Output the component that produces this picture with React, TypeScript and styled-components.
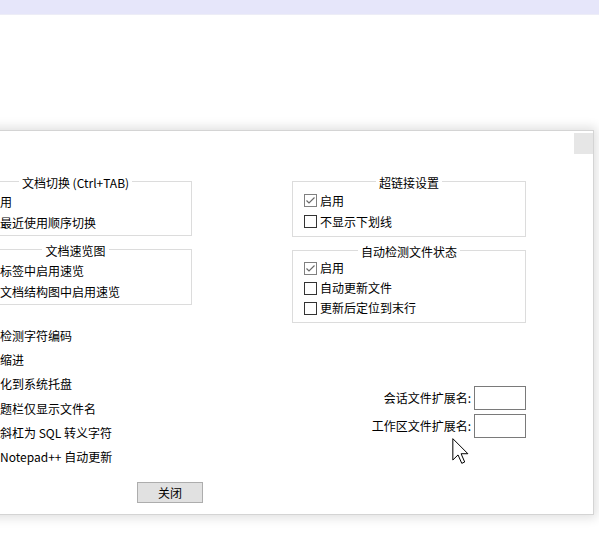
import React from "react";
import styled, { createGlobalStyle } from "styled-components";

const GlobalStyle = createGlobalStyle`
  html, body {
    margin: 0;
    padding: 0;
    background: #fff;
    overflow: hidden;
  }
  body {
    width: 599px;
    height: 548px;
    font-family: "Noto Sans CJK SC", "Noto Sans", sans-serif;
    font-size: 12px;
    color: #000;
  }
`;

const Page = styled.div`
  position: relative;
  height: 548px;
`;

const TopBar = styled.div`
  height: 14px;
  background: #e6e6fa;
  border-bottom: 1px solid #ededf7;
`;

const Dialog = styled.div`
  position: relative;
  box-sizing: border-box;
  width: 654px;
  margin: 115px 0 0 -60px;
  padding: 50px 67px 11px 18px;
  background: #fff;
  border: 1px solid #d4d4d4;
  box-shadow: 0 0 10px 3px rgba(0, 0, 0, 0.12);
`;

const CloseBox = styled.div`
  position: absolute;
  top: 2px;
  right: 0;
  width: 19px;
  height: 21px;
  background: #e6e6e6;
`;

const Columns = styled.div`
  display: grid;
  grid-template-columns: 233px 234px;
  column-gap: 100px;
  align-items: start;
`;

const Column = styled.div`
  display: flex;
  flex-direction: column;
`;

const Group = styled.div<{ $top?: number; $padB: number }>`
  margin-top: ${(p) => p.$top ?? 0}px;
  padding-bottom: ${(p) => p.$padB}px;
  border: 1px solid #dcdcdc;
`;

const GroupTitle = styled.div`
  width: fit-content;
  margin: -7px auto 0;
  padding: 0 3px;
  background: #fff;
  line-height: 16px;
  white-space: nowrap;
`;

const Rows = styled.div<{ $indent: number; $top?: number }>`
  display: flex;
  flex-direction: column;
  margin-top: ${(p) => p.$top ?? 0}px;
  padding-left: ${(p) => p.$indent}px;
`;

const CheckRow = styled.label<{ $h: number }>`
  display: flex;
  align-items: center;
  gap: 3px;
  height: ${(p) => p.$h}px;
  line-height: 16px;
  white-space: nowrap;
`;

const Box = styled.span<{ $checked?: boolean }>`
  flex: none;
  display: flex;
  box-sizing: border-box;
  width: 13px;
  height: 13px;
  background: #fff;
  border: 1px solid ${(p) => (p.$checked ? "#808080" : "#333")};
`;

const Fields = styled.div`
  display: flex;
  flex-direction: column;
  gap: 4px;
  margin-top: 63px;
`;

const FieldRow = styled.div`
  display: flex;
  justify-content: flex-end;
  align-items: center;
  gap: 3px;
  line-height: 16px;
  white-space: nowrap;
`;

const TextBox = styled.div`
  box-sizing: border-box;
  width: 52px;
  height: 24px;
  border: 1px solid #7a7a7a;
  background: #fff;
`;

const Footer = styled.div`
  display: flex;
  margin-top: 13px;
  padding-left: 178px;
`;

const Button = styled.button`
  box-sizing: border-box;
  width: 66px;
  height: 21px;
  padding: 0;
  background: #e1e1e1;
  border: 1px solid #adadad;
  font: inherit;
  color: #000;
  line-height: 16px;
`;

const Cursor = styled.svg`
  position: absolute;
  left: 452px;
  top: 438px;
`;

type Item = { label: string; checked?: boolean };

const Check = ({ label, checked, h }: Item & { h: number }) => (
  <CheckRow $h={h}>
    <Box $checked={checked}>
      {checked && (
        <svg width="11" height="11" viewBox="0 0 11 11">
          <polyline points="1.5,5.5 4,8 9.5,2.5" fill="none" stroke="#6a6a6a" strokeWidth="1.2" />
        </svg>
      )}
    </Box>
    {label}
  </CheckRow>
);

const GroupBox = ({
  title,
  items,
  h,
  top,
  padB,
  indent = 11,
  shift = 0,
}: {
  title: string;
  items: Item[];
  h: number;
  top?: number;
  padB: number;
  indent?: number;
  shift?: number;
}) => (
  <Group $top={top} $padB={padB}>
    <GroupTitle>{title}</GroupTitle>
    <Rows $indent={indent} $top={shift}>
      {items.map((it) => (
        <Check key={it.label} {...it} h={h} />
      ))}
    </Rows>
  </Group>
);

const misc: Item[] = [
  { label: "检测字符编码" },
  { label: "缩进" },
  { label: "化到系统托盘" },
  { label: "题栏仅显示文件名" },
  { label: "斜杠为 SQL 转义字符" },
  { label: "Notepad++ 自动更新" },
];

export default function App() {
  return (
    <Page>
      <GlobalStyle />
      <TopBar />
      <Dialog>
        <CloseBox />
        <Columns>
          <Column>
            <GroupBox
              title="文档切换 (Ctrl+TAB)"
              h={21}
              padB={2}
              indent={24}
              items={[{ label: "用" }, { label: "最近使用顺序切换" }]}
            />
            <GroupBox
              title="文档速览图"
              h={21}
              top={13}
              padB={2}
              indent={24}
              shift={1}
              items={[{ label: "标签中启用速览" }, { label: "文档结构图中启用速览" }]}
            />
            <Rows $indent={25} $top={18.5}>
              {misc.map((it) => (
                <Check key={it.label} {...it} h={24.3} />
              ))}
            </Rows>
          </Column>
          <Column>
            <GroupBox
              title="超链接设置"
              h={21}
              padB={4}
              shift={-1}
              items={[{ label: "启用", checked: true }, { label: "不显示下划线" }]}
            />
            <GroupBox
              title="自动检测文件状态"
              h={20}
              top={13}
              padB={4}
              shift={-2}
              items={[
                { label: "启用", checked: true },
                { label: "自动更新文件" },
                { label: "更新后定位到末行" },
              ]}
            />
            <Fields>
              <FieldRow>
                会话文件扩展名:
                <TextBox />
              </FieldRow>
              <FieldRow>
                工作区文件扩展名:
                <TextBox />
              </FieldRow>
            </Fields>
          </Column>
        </Columns>
        <Footer>
          <Button>关闭</Button>
        </Footer>
      </Dialog>
      <Cursor width="17" height="26" viewBox="0 0 12.5 19.5">
        <path
          d="M0.5 0.5 L0.5 16.5 L4.4 12.7 L7.2 19 L9.4 18 L6.7 11.8 L11.8 11.8 Z"
          fill="#fff"
          stroke="#000"
          strokeWidth="0.75"
          strokeLinejoin="miter"
        />
      </Cursor>
    </Page>
  );
}
